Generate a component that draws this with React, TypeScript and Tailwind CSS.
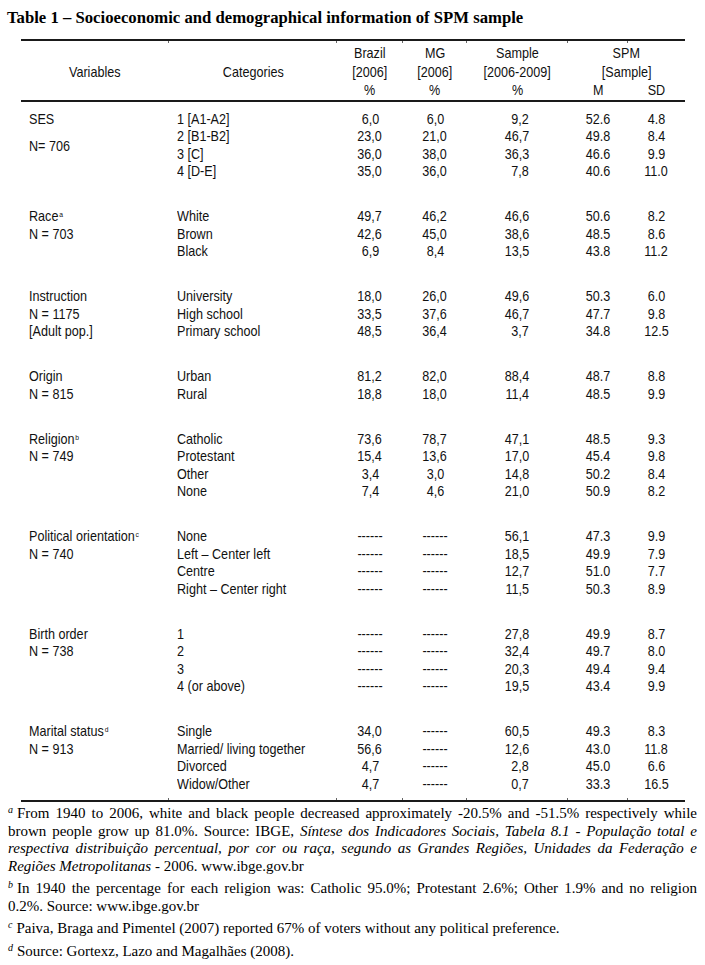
type Group = {
  label: string;
  sup?: string;
  extra: string[];
  spaced?: boolean;
  rows: string[][];
};

const groups: Group[] = [
  {
    label: "SES",
    extra: ["N= 706"],
    spaced: true,
    rows: [
      ["1 [A1-A2]", "6,0", "6,0", "9,2", "52.6", "4.8"],
      ["2 [B1-B2]", "23,0", "21,0", "46,7", "49.8", "8.4"],
      ["3 [C]", "36,0", "38,0", "36,3", "46.6", "9.9"],
      ["4 [D-E]", "35,0", "36,0", "7,8", "40.6", "11.0"],
    ],
  },
  {
    label: "Race",
    sup: "a",
    extra: ["N = 703"],
    rows: [
      ["White", "49,7", "46,2", "46,6", "50.6", "8.2"],
      ["Brown", "42,6", "45,0", "38,6", "48.5", "8.6"],
      ["Black", "6,9", "8,4", "13,5", "43.8", "11.2"],
    ],
  },
  {
    label: "Instruction",
    extra: ["N = 1175", "[Adult pop.]"],
    rows: [
      ["University", "18,0", "26,0", "49,6", "50.3", "6.0"],
      ["High school", "33,5", "37,6", "46,7", "47.7", "9.8"],
      ["Primary school", "48,5", "36,4", "3,7", "34.8", "12.5"],
    ],
  },
  {
    label: "Origin",
    extra: ["N = 815"],
    rows: [
      ["Urban", "81,2", "82,0", "88,4", "48.7", "8.8"],
      ["Rural", "18,8", "18,0", "11,4", "48.5", "9.9"],
    ],
  },
  {
    label: "Religion",
    sup: "b",
    extra: ["N = 749"],
    rows: [
      ["Catholic", "73,6", "78,7", "47,1", "48.5", "9.3"],
      ["Protestant", "15,4", "13,6", "17,0", "45.4", "9.8"],
      ["Other", "3,4", "3,0", "14,8", "50.2", "8.4"],
      ["None", "7,4", "4,6", "21,0", "50.9", "8.2"],
    ],
  },
  {
    label: "Political orientation",
    sup: "c",
    extra: ["N = 740"],
    rows: [
      ["None", "------", "------", "56,1", "47.3", "9.9"],
      ["Left – Center left", "------", "------", "18,5", "49.9", "7.9"],
      ["Centre", "------", "------", "12,7", "51.0", "7.7"],
      ["Right – Center right", "------", "------", "11,5", "50.3", "8.9"],
    ],
  },
  {
    label: "Birth order",
    extra: ["N = 738"],
    rows: [
      ["1", "------", "------", "27,8", "49.9", "8.7"],
      ["2", "------", "------", "32,4", "49.7", "8.0"],
      ["3", "------", "------", "20,3", "49.4", "9.4"],
      ["4 (or above)", "------", "------", "19,5", "43.4", "9.9"],
    ],
  },
  {
    label: "Marital status",
    sup: "d",
    extra: ["N = 913"],
    rows: [
      ["Single", "34,0", "------", "60,5", "49.3", "8.3"],
      ["Married/ living together", "56,6", "------", "12,6", "43.0", "11.8"],
      ["Divorced", "4,7", "------", "2,8", "45.0", "6.6"],
      ["Widow/Other", "4,7", "------", "0,7", "33.3", "16.5"],
    ],
  },
];

const tickWidths = ["w-[148px]", "w-[168px]", "w-[66px]", "w-[64px]", "w-[101px]", "w-[60px]"];

// the table face is a narrow sans; squeeze Liberation Sans to match
const L = ({ children }: { children: React.ReactNode }) => (
  <span className="inline-block whitespace-nowrap scale-x-[0.84] origin-left">{children}</span>
);
const C = ({ children }: { children: React.ReactNode }) => (
  <span className="inline-block whitespace-nowrap scale-x-[0.84] origin-center">{children}</span>
);
const R = ({ children }: { children: React.ReactNode }) => (
  <span className="inline-block whitespace-nowrap scale-x-[0.84] origin-right">{children}</span>
);

const Ticks = () => (
  <div className="flex h-[2px]">
    {tickWidths.map((w, i) => (
      <div key={i} className={`${w} border-r border-[#666]`} />
    ))}
  </div>
);

const Rule = () => <div className="border-t-2 border-[#1a1a1a]" />;

const GroupBlock = ({ g }: { g: Group }) => (
  <div className="flex">
    <div className="w-[148px] pl-[8px]">
      <div>
        <L>
          {g.label}
          {g.sup && <sup className="text-[8px] ml-[1px]">{g.sup}</sup>}
        </L>
      </div>
      {g.extra.map((e) => (
        <div key={e} className={g.spaced ? "mt-[9.5px]" : ""}>
          <L>{e}</L>
        </div>
      ))}
    </div>
    <div className="grid grid-cols-[168px_66px_64px_101px_60px_57px]">
      {g.rows.map((r) => (
        <div key={r[0]} className="contents">
          <div className="pl-[8px]">
            <L>{r[0]}</L>
          </div>
          <div className="text-center">
            <C>{r[1]}</C>
          </div>
          <div className="text-center">
            <C>{r[2]}</C>
          </div>
          <div className="text-right pr-[39px]">
            <R>{r[3]}</R>
          </div>
          <div className="text-right pr-[18px]">
            <R>{r[4]}</R>
          </div>
          <div className="text-center">
            <C>{r[5]}</C>
          </div>
        </div>
      ))}
    </div>
  </div>
);

const Fn = ({ mark }: { mark: string }) => (
  <sup className="italic text-[10px] mr-[4px]">{mark}</sup>
);

export default function App() {
  return (
    <div className="w-[705px] h-[965px] bg-white text-black overflow-hidden">
      <h1 className="pl-[7px] pt-[8px] font-['Liberation_Serif',serif] font-bold text-[16.7px] leading-[19px]">
        Table 1 – Socioeconomic and demographical information of SPM sample
      </h1>

      <div className="ml-[21px] mt-[12px] w-[664px] font-['Liberation_Sans',Arial,sans-serif] text-[15px] text-[#111]">
        <Rule />
        <Ticks />
        <div className="grid grid-cols-[148px_168px_66px_64px_101px_60px_57px] pt-[1px] leading-[18.5px] text-center">
          <div />
          <div />
          <div><C>Brazil</C></div>
          <div><C>MG</C></div>
          <div><C>Sample</C></div>
          <div className="col-span-2"><C>SPM</C></div>

          <div><C>Variables</C></div>
          <div><C>Categories</C></div>
          <div><C>[2006]</C></div>
          <div><C>[2006]</C></div>
          <div><C>[2006-2009]</C></div>
          <div className="col-span-2"><C>[Sample]</C></div>

          <div />
          <div />
          <div><C>%</C></div>
          <div><C>%</C></div>
          <div><C>%</C></div>
          <div><C>M</C></div>
          <div><C>SD</C></div>
        </div>
        <Rule />

        <div className="flex flex-col gap-[27.5px] pt-[8px] pb-[6px] leading-[17.5px]">
          {groups.map((g) => (
            <GroupBlock key={g.label} g={g} />
          ))}
        </div>
        <Ticks />
        <Rule />
      </div>

      <div className="ml-[8px] mt-[3px] w-[689px] flex flex-col gap-[5px] font-['Liberation_Serif',serif] text-[15px] leading-[17.5px]">
        <div>
          <div className="text-justify [text-align-last:justify]">
            <Fn mark="a" />From 1940 to 2006, white and black people decreased approximately -20.5% and -51.5% respectively while
          </div>
          <div className="text-justify [text-align-last:justify]">
            brown people grow up 81.0%. Source: IBGE, <i>Síntese dos Indicadores Sociais, Tabela 8.1 - População total e</i>
          </div>
          <div className="text-justify [text-align-last:justify] italic">
            respectiva distribuição percentual, por cor ou raça, segundo as Grandes Regiões, Unidades da Federação e
          </div>
          <div>
            <i>Regiões Metropolitanas</i> - 2006. www.ibge.gov.br
          </div>
        </div>
        <div>
          <div className="text-justify [text-align-last:justify]">
            <Fn mark="b" />In 1940 the percentage for each religion was: Catholic 95.0%; Protestant 2.6%; Other 1.9% and no religion
          </div>
          <div>0.2%. Source: www.ibge.gov.br</div>
        </div>
        <div>
          <Fn mark="c" />Paiva, Braga and Pimentel (2007) reported 67% of voters without any political preference.
        </div>
        <div>
          <Fn mark="d" />Source: Gortexz, Lazo and Magalhães (2008).
        </div>
      </div>
    </div>
  );
}
